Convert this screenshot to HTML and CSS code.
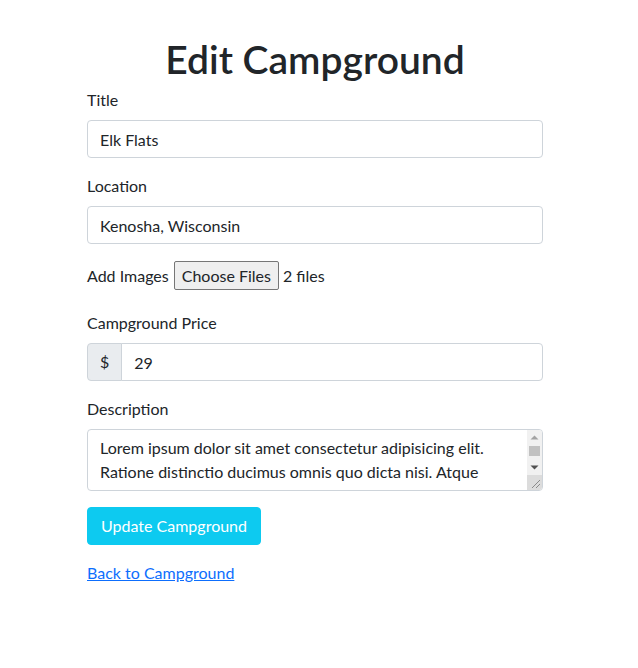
FILE: index.html
```html
<!DOCTYPE html>
<html lang="en">
<head>
<meta charset="utf-8">
<title>Edit Campground</title>
<link rel="stylesheet" href="styles.css">
</head>
<body>
<main class="page">
  <h1 class="title">Edit Campground</h1>
  <form class="form">
    <div class="field">
      <label class="label" for="title">Title</label>
      <input class="control" id="title" type="text" value="Elk Flats">
    </div>
    <div class="field">
      <label class="label" for="location">Location</label>
      <input class="control" id="location" type="text" value="Kenosha, Wisconsin">
    </div>
    <div class="field file-row">
      <span class="file-label">Add Images</span>
      <span class="file-btn">Choose Files</span>
      <span class="file-count">2 files</span>
    </div>
    <div class="field">
      <label class="label" for="price">Campground Price</label>
      <div class="input-group">
        <span class="addon">$</span>
        <input class="control group-control" id="price" type="text" value="29">
      </div>
    </div>
    <div class="field">
      <label class="label" for="desc">Description</label>
      <div class="textarea-wrap">
        <textarea class="control textarea" id="desc" rows="2">Lorem ipsum dolor sit amet consectetur adipisicing elit.
Ratione distinctio ducimus omnis quo dicta nisi. Atque
voluptatem, quia tempora dolorum facilis eveniet.</textarea>
        <div class="scrollbar" aria-hidden="true">
          <div class="sb-btn">
            <svg width="15" height="15" viewBox="0 0 15 15"><path d="M3.5 9.5 L7.5 5.5 L11.5 9.5 Z" fill="#a3a3a3"/></svg>
          </div>
          <div class="sb-track"><div class="sb-thumb"></div></div>
          <div class="sb-btn">
            <svg width="15" height="15" viewBox="0 0 15 15"><path d="M3.5 5.5 L11.5 5.5 L7.5 9.5 Z" fill="#505050"/></svg>
          </div>
          <div class="sb-corner">
            <svg width="15" height="15" viewBox="0 0 15 15"><path d="M5 13 L13 5 M9 13 L13 9" stroke="#8a8a8a" stroke-width="1"/></svg>
          </div>
        </div>
      </div>
    </div>
    <div class="field">
      <button class="btn" type="button">Update Campground</button>
    </div>
    <a class="back" href="#">Back to Campground</a>
  </form>
</main>
</body>
</html>
```

FILE: styles.css
```css
* { box-sizing: border-box; }
body {
  margin: 0;
  font-family: Lato, "Noto Sans", sans-serif;
  font-size: 16px;
  line-height: 1.5;
  color: #212529;
  background: #fff;
}
.page {
  width: 456px;
  margin-left: 87px;
  padding-top: 35px;
}
.title {
  margin: 0 0 5px;
  font-size: 39px;
  line-height: 48px;
  font-weight: 600;
  text-align: center;
}
.form { display: block; }
.field { margin-bottom: 16px; }
.label {
  display: block;
  margin-bottom: 8px;
  line-height: 24px;
}
.control {
  display: block;
  width: 100%;
  height: 38px;
  padding: 6px 12px;
  font: inherit;
  line-height: 24px;
  color: #212529;
  background: #fff;
  border: 1px solid #ced4da;
  border-radius: 4px;
  outline: none;
}
.file-row {
  display: flex;
  align-items: center;
  height: 35px;
  padding-bottom: 4px;
}
.file-label { margin-right: 5px; }
.file-btn {
  display: inline-flex;
  align-items: center;
  height: 29px;
  padding: 0 7px;
  background: #efefef;
  border: 1px solid #767676;
  border-radius: 2px;
  margin-right: 4px;
}
.input-group {
  display: flex;
  width: 100%;
}
.addon {
  display: flex;
  align-items: center;
  padding: 6px 12px;
  height: 38px;
  background: #e9ecef;
  border: 1px solid #ced4da;
  border-radius: 4px 0 0 4px;
}
.group-control {
  flex: 1;
  margin-left: -1px;
  border-radius: 0 4px 4px 0;
}
.textarea-wrap {
  position: relative;
}
.textarea {
  height: 62px;
  resize: none;
  overflow: hidden;
  white-space: pre;
  padding-right: 28px;
}
.scrollbar {
  position: absolute;
  top: 1px;
  right: 1px;
  bottom: 1px;
  width: 15px;
  display: flex;
  flex-direction: column;
  background: #f1f1f1;
  border-radius: 0 3px 3px 0;
  overflow: hidden;
}
.sb-btn {
  height: 15px;
  flex: none;
}
.sb-btn svg, .sb-corner svg { display: block; }
.sb-track {
  flex: 1;
  padding: 1px 2px 0;
}
.sb-thumb {
  height: 10px;
  background: #c1c1c1;
}
.sb-corner {
  height: 15px;
  flex: none;
  background: #dcdcdc;
}
.btn {
  height: 38px;
  padding: 6px 13px;
  font: inherit;
  line-height: 24px;
  color: #fff;
  background: #0dcaf0;
  border: 1px solid #0dcaf0;
  border-radius: 4px;
}
.back {
  display: inline-block;
  line-height: 24px;
  color: #0d6efd;
  text-decoration: underline;
}
```
